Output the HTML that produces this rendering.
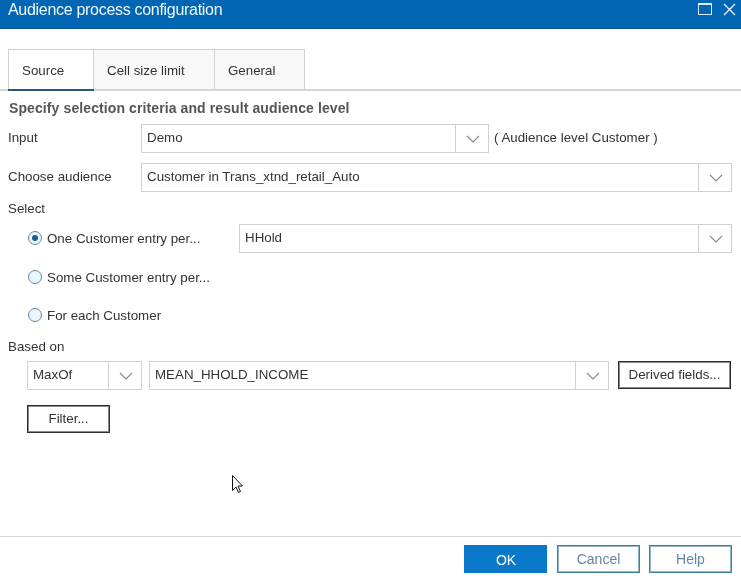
<!DOCTYPE html>
<html><head><meta charset="utf-8">
<style>
*{box-sizing:border-box;margin:0;padding:0}
html,body{width:741px;height:578px;overflow:hidden;background:#fff}
.t,.box,.tab,.btn,.fbtn,.tx{will-change:transform}
body{position:relative;font-family:"Liberation Sans",sans-serif;font-size:13.33px;color:#333}
.a{position:absolute}
.t{position:absolute;white-space:nowrap;line-height:15px}
#title{left:0;top:0;width:741px;height:29px;background:#0066b4;border-bottom:1px solid #0d5592}
#title .tx{position:absolute;left:8px;top:1px;font-size:16px;letter-spacing:-0.3px;line-height:17px;color:#eef8ff;white-space:nowrap}
.tab{position:absolute;top:49px;height:40px;border:1px solid #d2d2d2;border-bottom:none;background:#f8f8f8;line-height:40px;padding-top:1px;padding-left:13px;text-align:left}
.box{position:absolute;height:29px;border:1px solid #d0d0d0;background:#fff;line-height:26px;padding-left:5px;white-space:nowrap;color:#333}
.arr{position:absolute;top:-1px;right:-1px;width:34px;height:29px;border:1px solid #d0d0d0;background:#fff}
.arr svg{position:absolute;left:9.5px;top:10px}
.btn{position:absolute;height:28px;border:1px solid #2e2e2e;box-shadow:inset 0 0 0 1px #8a8a8a;background:#fff;line-height:25px;text-align:center;white-space:nowrap;color:#333}
.radio{position:absolute;left:28px;width:14px;height:14px;border-radius:50%;border:1.5px solid #6a8699;background:#e9f6fd}
.radio.on::after{content:"";position:absolute;left:2.5px;top:2.5px;width:6px;height:6px;border-radius:50%;background:#1c5d8d}
.fbtn{position:absolute;top:545px;height:28px;line-height:28px;padding-top:1px;text-align:center;font-size:14px}
</style></head><body>
<div id="title" class="a">
  <div class="tx">Audience process configuration</div>
  <div class="a" style="left:698px;top:3px;width:14px;height:12px;border:1px solid #d8eeff;border-top-width:2px"></div>
  <svg class="a" style="left:722px;top:2px" width="15" height="15" viewBox="0 0 15 15"><path d="M2 2 L13 13 M13 2 L2 13" stroke="#e6f4ff" stroke-width="1.3" fill="none"/></svg>
</div>

<!-- tabs -->
<div class="a" style="left:0;top:89px;width:741px;height:2px;background:#d6d6d6"></div>
<div class="tab" style="left:8px;width:86px;background:#fff">Source</div>
<div class="tab" style="left:93px;width:122px">Cell size limit</div>
<div class="tab" style="left:214px;width:91px">General</div>
<div class="a" style="left:8px;top:89px;width:86px;height:2px;background:#28597a"></div>

<div class="t" style="left:9px;top:101px;font-weight:bold;font-size:14px;letter-spacing:0.1px;color:#555">Specify selection criteria and result audience level</div>

<div class="t" style="left:8px;top:130px">Input</div>
<div class="box" style="left:141px;top:124px;width:348px">Demo<div class="arr"><svg width="14" height="8" viewBox="0 0 14 8"><path d="M1 1 L7 7 L13 1" stroke="#888" stroke-width="1.15" fill="none"/></svg></div></div>
<div class="t" style="left:494px;top:130px">( Audience level Customer )</div>

<div class="t" style="left:8px;top:169px">Choose audience</div>
<div class="box" style="left:141px;top:163px;width:591px">Customer in Trans_xtnd_retail_Auto<div class="arr"><svg width="14" height="8" viewBox="0 0 14 8"><path d="M1 1 L7 7 L13 1" stroke="#888" stroke-width="1.15" fill="none"/></svg></div></div>

<div class="t" style="left:8px;top:201px">Select</div>

<div class="radio on" style="top:231px"></div>
<div class="t" style="left:47px;top:231px">One Customer entry per...</div>
<div class="box" style="left:239px;top:224px;width:493px">HHold<div class="arr"><svg width="14" height="8" viewBox="0 0 14 8"><path d="M1 1 L7 7 L13 1" stroke="#888" stroke-width="1.15" fill="none"/></svg></div></div>

<div class="radio" style="top:270px"></div>
<div class="t" style="left:47px;top:270px">Some Customer entry per...</div>

<div class="radio" style="top:308px"></div>
<div class="t" style="left:47px;top:308px">For each Customer</div>

<div class="t" style="left:8px;top:339px">Based on</div>
<div class="box" style="left:27px;top:361px;width:115px">MaxOf<div class="arr"><svg width="14" height="8" viewBox="0 0 14 8"><path d="M1 1 L7 7 L13 1" stroke="#888" stroke-width="1.15" fill="none"/></svg></div></div>
<div class="box" style="left:149px;top:361px;width:460px">MEAN_HHOLD_INCOME<div class="arr"><svg width="14" height="8" viewBox="0 0 14 8"><path d="M1 1 L7 7 L13 1" stroke="#888" stroke-width="1.15" fill="none"/></svg></div></div>
<div class="btn" style="left:618px;top:361px;width:113px">Derived fields...</div>

<div class="btn" style="left:27px;top:405px;width:83px">Filter...</div>

<!-- cursor -->
<svg class="a" style="left:231px;top:474px" width="14" height="20" viewBox="0 0 14 20"><path d="M1.5 1.5 L1.5 16.5 L5 13 L7.5 18.5 L9.5 17.5 L7 12 L11.5 12 Z" fill="#fff" stroke="#111" stroke-width="1" stroke-linejoin="miter"/></svg>

<!-- footer -->
<div class="a" style="left:0;top:536px;width:741px;height:1px;background:#d6d6d6"></div>
<div class="fbtn" style="left:464px;width:83px;padding-left:1px;background:#0a78c8;color:#fff">OK</div>
<div class="fbtn" style="left:557px;width:83px;border:1px solid #3f7d9c;box-shadow:inset 0 0 0 1px #8fb6c9;line-height:25px;color:#6587a0;background:#fff">Cancel</div>
<div class="fbtn" style="left:649px;width:83px;border:1px solid #3f7d9c;box-shadow:inset 0 0 0 1px #8fb6c9;line-height:25px;color:#6587a0;background:#fff">Help</div>
</body></html>
